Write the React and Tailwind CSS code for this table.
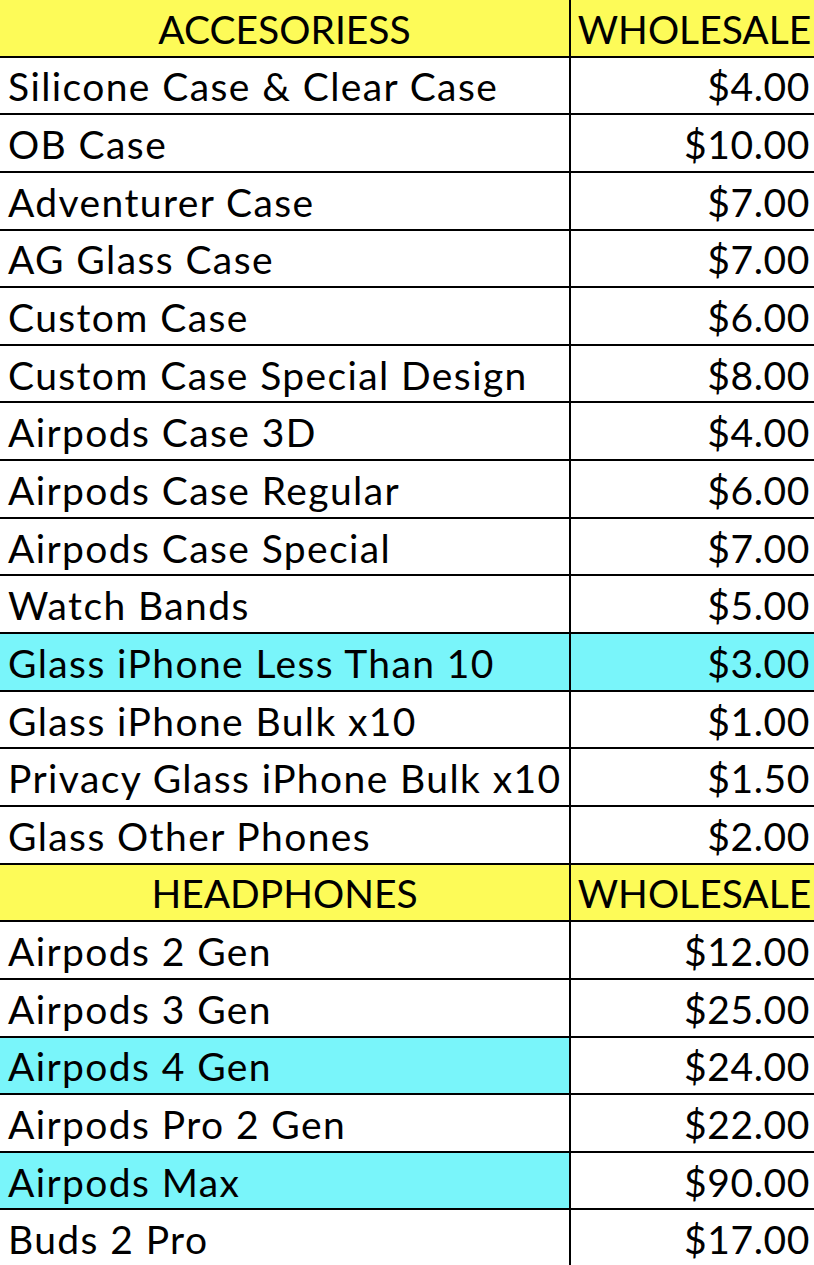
import React from 'react';

const sections = [
  {
    title: 'ACCESORIESS',
    items: [
      { name: 'Silicone Case & Clear Case', price: '$4.00' },
      { name: 'OB Case', price: '$10.00' },
      { name: 'Adventurer Case', price: '$7.00' },
      { name: 'AG Glass Case', price: '$7.00' },
      { name: 'Custom Case', price: '$6.00' },
      { name: 'Custom Case Special Design', price: '$8.00' },
      { name: 'Airpods Case 3D', price: '$4.00' },
      { name: 'Airpods Case Regular', price: '$6.00' },
      { name: 'Airpods Case Special', price: '$7.00' },
      { name: 'Watch Bands', price: '$5.00' },
      { name: 'Glass iPhone Less Than 10', price: '$3.00', hl: 'both' },
      { name: 'Glass iPhone Bulk x10', price: '$1.00' },
      { name: 'Privacy Glass iPhone Bulk x10', price: '$1.50' },
      { name: 'Glass Other Phones', price: '$2.00' },
    ],
  },
  {
    title: 'HEADPHONES',
    items: [
      { name: 'Airpods 2 Gen', price: '$12.00' },
      { name: 'Airpods 3 Gen', price: '$25.00' },
      { name: 'Airpods 4 Gen', price: '$24.00', hl: 'left' },
      { name: 'Airpods Pro 2 Gen', price: '$22.00' },
      { name: 'Airpods Max', price: '$90.00', hl: 'left' },
      { name: 'Buds 2 Pro', price: '$17.00' },
    ],
  },
];

const cell = 'h-[57.65px] border-b-2 border-black flex items-center pt-[3px]';

const App = () => {
  return (
    <div className="w-[814px] h-[1265px] overflow-hidden bg-white text-black text-[39px] leading-none font-['Lato','Liberation_Sans',sans-serif]">
      <div className="grid grid-cols-[571px_1fr]">
        {sections.map((s) => (
          <React.Fragment key={s.title}>
            <div className={`${cell} bg-[#fdfb58] border-r-2 justify-center`}>{s.title}</div>
            <div className={`${cell} bg-[#fdfb58] justify-center pl-[4px]`}>WHOLESALE</div>
            {s.items.map((it) => (
              <React.Fragment key={it.name}>
                <div className={`${cell} border-r-2 pl-[8px] tracking-[1.4px] whitespace-nowrap ${it.hl ? 'bg-[#79f5fa]' : 'bg-white'}`}>{it.name}</div>
                <div className={`${cell} justify-end pr-[4px] tracking-[0.6px] ${it.hl === 'both' ? 'bg-[#79f5fa]' : 'bg-white'}`}>{it.price}</div>
              </React.Fragment>
            ))}
          </React.Fragment>
        ))}
      </div>
    </div>
  );
};

export default App;
